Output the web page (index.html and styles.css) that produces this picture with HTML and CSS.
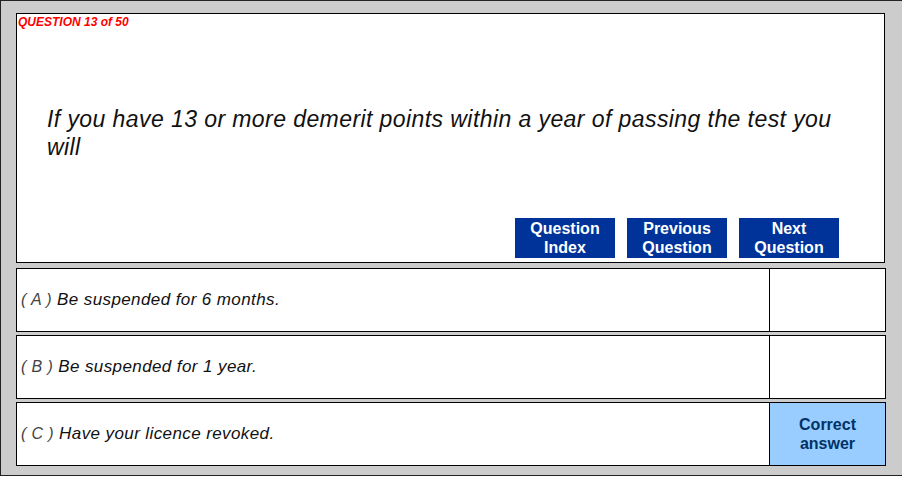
FILE: index.html
```html
<!DOCTYPE html>
<html lang="en">
  <head>
    <meta charset="UTF-8" />
    <title>Question 13 of 50</title>
    <link rel="stylesheet" href="styles.css">
  </head>
  <body>
    <div class="page">
      <div class="question">
        <div class="counter">QUESTION 13 of 50</div>
        <p class="text">If you have 13 or more demerit points within a year of passing the test you will</p>
        <div class="nav">
          <a class="btn" href="#">Question<br />Index</a>
          <a class="btn" href="#">Previous<br />Question</a>
          <a class="btn" href="#">Next<br />Question</a>
        </div>
      </div>
      <div class="answers">
        <div class="answer">
          <div class="label"><span class="letter">( A )</span> Be suspended for 6 months.</div>
          <div class="mark"></div>
        </div>
        <div class="answer">
          <div class="label"><span class="letter">( B )</span> Be suspended for 1 year.</div>
          <div class="mark"></div>
        </div>
        <div class="answer">
          <div class="label"><span class="letter">( C )</span> Have your licence revoked.</div>
          <div class="mark correct">Correct<br />answer</div>
        </div>
      </div>
    </div>
  </body>
</html>
```

FILE: styles.css
```css
* {
  padding: 0;
  margin: 0;
  box-sizing: border-box;
}
body {
  font-family: "Liberation Sans", Arial, sans-serif;
  background: #fff;
}
.page {
  width: 902px;
  height: 476px;
  border: 1px solid #222;
  border-right: none;
  background-color: #cccccc;
  padding: 12px 0 0 15px;
}
.question {
  width: 869px;
  height: 250px;
  border: 1px solid #000;
  background: #fff;
  display: flex;
  flex-direction: column;
}
.counter {
  color: #ff0000;
  font-size: 12px;
  font-weight: bold;
  font-style: italic;
  padding: 1px 0 0 1px;
}
.text {
  flex: 1;
  font-size: 23px;
  font-style: italic;
  letter-spacing: 0.42px;
  line-height: 28px;
  color: #111;
  padding: 76px 45px 0 30px;
}
.nav {
  display: flex;
  justify-content: flex-end;
  gap: 12px;
  padding: 0 45px 4px 0;
}
.btn {
  width: 100px;
  height: 40px;
  background-color: #003399;
  color: #fff;
  font-size: 16px;
  font-weight: bold;
  line-height: 19px;
  text-align: center;
  text-decoration: none;
  padding-top: 1px;
}
.answers {
  display: flex;
  flex-direction: column;
  gap: 3px;
  margin-top: 5px;
}
.answer {
  width: 870px;
  height: 64px;
  border: 1px solid #000;
  background: #fff;
  display: grid;
  grid-template-columns: 1fr 116px;
}
.label {
  display: flex;
  align-items: center;
  gap: 5px;
  padding-left: 4px;
  font-size: 17px;
  font-style: italic;
  letter-spacing: 0.4px;
  color: #111;
}
.letter {
  color: #444;
  font-weight: normal;
  font-size: 16px;
}
.mark {
  border-left: 1px solid #000;
}
.correct {
  background-color: #99ccff;
  color: #003366;
  font-size: 16px;
  font-weight: bold;
  line-height: 19px;
  letter-spacing: 0;
  text-align: center;
  display: flex;
  align-items: center;
  justify-content: center;
}
```
